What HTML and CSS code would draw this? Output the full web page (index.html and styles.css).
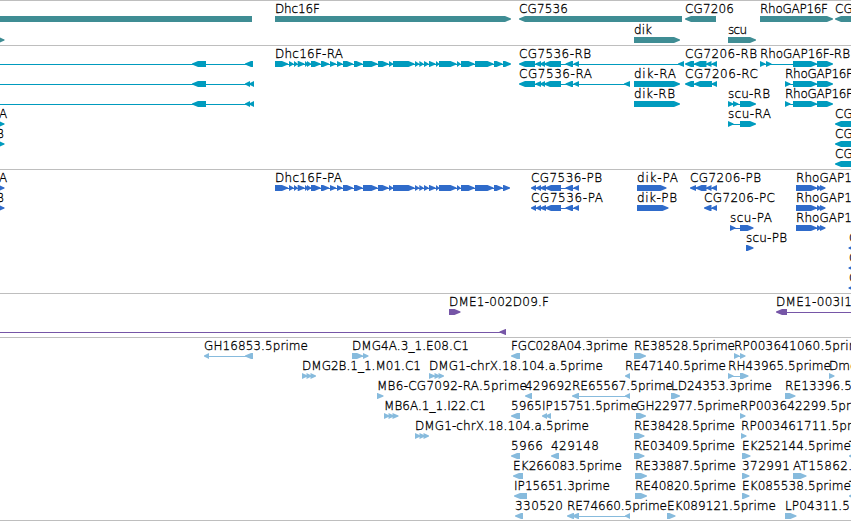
FILE: index.html
```html
<!DOCTYPE html>
<html lang="en">
<head>
    <meta charset="UTF-8">
    <meta name="viewport" content="width=device-width, initial-scale=1.0">
    <title>Genome Browser</title>
    <link rel="stylesheet" href="styles.css">
</head>
<body>
    <div class="browser">
        <svg class="track genes" id="genes"></svg>
        <svg class="track transcripts" id="transcripts"></svg>
        <svg class="track proteins" id="proteins"></svg>
        <svg class="track bacs" id="bacs"></svg>
        <svg class="track ests" id="ests"></svg>
    </div>
    <script src="tracks.js"></script>
</body>
</html>
```
FILE: styles.css
```css
body {
    margin: 0;
    background-color: #fff;
    overflow: hidden;
}
.browser {
    display: flex;
    flex-direction: column;
    width: 851px;
    border-bottom: 1px solid #bebebe;
}
.track {
    display: block;
    box-sizing: border-box;
    width: 100%;
    border-top: 1px solid #bebebe;
    overflow: hidden;
}
.genes {
    height: 45px;
    color: #3f8d94;
}
.transcripts {
    height: 124px;
    color: #009bbe;
}
.proteins {
    height: 124px;
    color: #2f6bca;
}
.bacs {
    height: 44px;
    color: #7656a7;
}
.ests {
    height: 183px;
    color: #87bbdd;
}
.label {
    font-family: "DejaVu Sans", sans-serif;
    font-size: 12px;
    font-weight: 200;
    fill: #000;
    stroke: #000;
    stroke-width: 0.3px;
}
.block {
    fill: currentColor;
}
.intron {
    fill: currentColor;
    shape-rendering: crispEdges;
}
```
FILE: tracks.js
```js
// Feature: [row, strand, label, label start, label end (0 = natural width), blocks]
const dhcBlocks = [
    [275, 288], [289, 293.5], [294, 297.5], [297.7, 304.5], [305, 308], [307, 311],
    [311, 320.5], [321, 329], [330, 336], [337, 342.5], [343, 353], [354, 362.5],
    [363, 377.5], [378, 388.5], [389, 393], [393, 414.5], [415, 419], [419.3, 423.5],
    [424, 428.5], [429, 435.5], [436, 439], [439, 456.5], [457, 460.5], [461, 474.5],
    [475, 493.5], [494, 502.5], [503, 511]
];
const rhoBlocks = [[785, 790.5], [793, 817], [817, 833]];
const rhoProtein = [[796, 817], [817, 821.5], [820, 825.5]];
const cg7536 = [[519, 535], [535.3, 541], [540, 545], [544, 561], [565.5, 573], [573.5, 579]];
const cg7536Protein = [[531, 536], [536, 541], [540, 546], [545, 561], [565.5, 573], [573.5, 579]];

const tracks = {
    genes: {
        pitch: 21,
        features: [
            [0, '-', '', 0, 0, [[-10, 252]]],
            [1, '+', '', 0, 0, [[-10, 4.5]]],
            [0, '+', 'Dhc16F', 275, 320, [[275, 511]]],
            [0, '-', 'CG7536', 519, 568, [[519, 682]]],
            [1, '+', 'dik', 634, 652, [[634, 680]]],
            [0, '-', 'CG7206', 685, 734, [[685, 716]]],
            [1, '+', 'scu', 728, 747, [[728, 756]]],
            [0, '+', 'RhoGAP16F', 760, 828, [[760, 833]]],
            [0, '-', 'CG', 835, 0, [[835, 870]]]
        ]
    },
    transcripts: {
        pitch: 20,
        features: [
            [0, '-', '', 0, 0, [[-20, -10], [192, 206], [245, 253]]],
            [1, '-', '', 0, 0, [[-20, -10], [192, 206], [245, 250], [249, 254]]],
            [2, '-', '', 0, 0, [[-20, -10], [192, 206], [245, 250], [249, 254]]],
            [3, '+', 'A', -1, 0, [[-10, 4.5]]],
            [4, '+', 'B', -4, 0, [[-10, 4.5]]],
            [0, '+', 'Dhc16F-RA', 275, 343, dhcBlocks],
            [0, '-', 'CG7536-RB', 519, 591, [...cg7536, [678, 684]]],
            [1, '-', 'CG7536-RA', 519, 592, [...cg7536, [624, 630]]],
            [1, '+', 'dik-RA', 634, 676, [[634, 680]]],
            [2, '+', 'dik-RB', 634, 675, [[634, 680]]],
            [0, '-', 'CG7206-RB', 685, 757, [[685, 694], [694, 706.5], [706, 711.5], [711.5, 717]]],
            [1, '-', 'CG7206-RC', 685, 758, [[685, 694], [694, 712], [711.5, 717]]],
            [0, '+', 'RhoGAP16F-RB', 760, 850, [[760, 765.5], [766, 771.5], [793, 817], [817, 833]]],
            [1, '+', 'RhoGAP16F', 785, 853, rhoBlocks],
            [2, '+', 'RhoGAP16F', 785, 853, rhoBlocks],
            [2, '+', 'scu-RB', 728, 770, [[728, 733.5], [733, 738.5], [740, 756]]],
            [3, '+', 'scu-RA', 728, 771, [[728, 733.5], [740, 756]]],
            [3, '-', 'CG', 835, 0, [[835, 870]]],
            [4, '-', 'CG', 835, 0, [[835, 870]]],
            [5, '-', 'CG', 835, 0, [[835, 870]]]
        ]
    },
    proteins: {
        pitch: 20,
        features: [
            [0, '+', 'A', -1, 0, [[-10, 4.5]]],
            [1, '+', 'B', -4, 0, [[-10, 4.5]]],
            [0, '+', 'Dhc16F-PA', 275, 342, [...dhcBlocks.slice(0, -1), [503, 510]]],
            [0, '-', 'CG7536-PB', 531, 602, cg7536Protein],
            [1, '-', 'CG7536-PA', 531, 603, cg7536Protein],
            [0, '+', 'dik-PA', 637, 678, [[637, 666.5]]],
            [1, '+', 'dik-PB', 637, 677, [[637, 668.5]]],
            [0, '-', 'CG7206-PB', 690, 761, [[690, 696], [695.5, 706.5], [706, 711.5], [711.5, 717]]],
            [1, '-', 'CG7206-PC', 704, 775, [[704, 711.5], [711.5, 717]]],
            [2, '+', 'scu-PA', 730, 772, [[730, 735.5], [740, 753.5]]],
            [3, '+', 'scu-PB', 746, 787, [[746, 753.5]]],
            [0, '+', 'RhoGAP1', 796, 852, rhoProtein],
            [1, '+', 'RhoGAP1', 796, 852, rhoProtein],
            [2, '+', 'RhoGAP1', 796, 852, rhoProtein],
            [3, '-', 'C', 849, 0, [[848.5, 870]]],
            [4, '-', 'C', 849, 0, [[848.5, 870]]],
            [5, '-', 'C', 849, 0, [[848.5, 870]]]
        ]
    },
    bacs: {
        pitch: 20,
        features: [
            [0, '+', 'DME1-002D09.F', 449, 549, [[449, 460.5]]],
            [1, '-', '', 0, 0, [[-20, -10], [499.5, 506]]],
            [0, '-', 'DME1-003I1', 776, 852, [[776, 787], [870, 880]]]
        ]
    },
    ests: {
        pitch: 20,
        features: [
            [0, '-', 'GH16853.5prime', 204, 308, [[204, 209], [245, 253]]],
            [0, '+', 'DMG4A.3_1.E08.C1', 352, 469, [[352, 363], [363, 368.5]]],
            [0, '-', 'FGC028A04.3prime', 511, 628, [[511, 520]]],
            [0, '+', 'RE38528.5prime', 634, 735, [[634, 646]]],
            [0, '+', 'RP003641060.5prime', 734, 868, [[734, 739.5], [740, 745.5]]],
            [1, '+', 'DMG2B.1_1.M01.C1', 302, 421, [[302, 307.5], [306.5, 311.5], [310.5, 316]]],
            [1, '+', 'DMG1-chrX.18.104.a.5prime', 429, 603, [[429, 435], [434.5, 440], [438.5, 444]]],
            [1, '-', 'RE47140.5prime', 625, 726, [[625, 630]]],
            [1, '+', 'RH43965.5prime', 728, 831, [[728, 733.5], [740, 748.5]]],
            [1, '+', 'Dme', 829, 0, [[829, 834.5]]],
            [2, '+', 'MB6-CG7092-RA.5prime', 377, 527, [[377, 383.5]]],
            [2, '-', '429692', 525, 572, [[525, 532]]],
            [2, '-', 'RE65567.5prime', 572, 673, [[572, 579], [625, 630]]],
            [2, '+', 'LD24353.3prime', 671, 772, [[671, 680]]],
            [2, '+', 'RE13396.5', 785, 852, [[785, 795.5]]],
            [3, '+', 'MB6A.1_1.I22.C1', 384, 486, [[384, 389.5], [388.5, 394], [392.5, 398.5]]],
            [3, '-', '5965', 511, 542, [[511, 520]]],
            [3, '-', 'IP15751.5prime', 542, 638, [[542, 547], [545.5, 551]]],
            [3, '+', 'GH22977.5prime', 636, 740, [[636, 646]]],
            [3, '+', 'RP003642299.5prime', 740, 874, [[740, 745.5]]],
            [4, '+', 'DMG1-chrX.18.104.a.5prime', 415, 589, [[415, 420.5], [419.5, 425], [423.5, 429]]],
            [4, '+', 'RE38428.5prime', 634, 735, [[634, 644.5]]],
            [4, '+', 'RP003461711.5prime', 741, 875, [[741, 746.5]]],
            [5, '-', '5966', 511, 543, [[511, 520]]],
            [5, '-', '429148', 551, 599, [[551, 559]]],
            [5, '+', 'RE03409.5prime', 634, 735, [[634, 644.5]]],
            [5, '+', 'EK252144.5prime', 742, 851, [[742, 750.5]]],
            [5, '-', 'T', 849, 0, [[849, 858]]],
            [6, '-', 'EK266083.5prime', 513, 622, [[513, 523]]],
            [6, '+', 'RE33887.5prime', 635, 736, [[635, 647]]],
            [6, '+', '372991', 742, 790, [[742, 749.5]]],
            [6, '+', 'AT15862.', 793, 852, [[793, 806.5]]],
            [7, '-', 'IP15651.3prime', 514, 610, [[514, 527]]],
            [7, '+', 'RE40820.5prime', 635, 736, [[635, 647]]],
            [7, '+', 'EK085538.5prime', 742, 851, [[742, 749.5]]],
            [7, '-', 'T', 849, 0, [[849, 858]]],
            [8, '-', '330520', 515, 563, [[515, 523]]],
            [8, '-', 'RE74660.5prime', 567, 667, [[567, 574], [572, 579], [625, 630]]],
            [8, '+', 'EK089121.5prime', 667, 776, [[667, 675.5]]],
            [8, '+', 'LP04311.5', 785, 850, [[785, 796.5]]]
        ]
    }
};

// Block with an arrow head on the strand side
function blockPath(start, end, y, strand) {
    const head = Math.min(6, end - start);
    const neck = head * 0.6;
    if (strand === '+') {
        return `M${start} ${y}H${end - head}L${end - head + neck} ${y + 1.4}L${end} ${y + 2.6}V${y + 3.4}` +
            `L${end - head + neck} ${y + 4.6}L${end - head} ${y + 6}H${start}Z`;
    }
    return `M${end} ${y}H${start + head}L${start + head - neck} ${y + 1.4}L${start} ${y + 2.6}V${y + 3.4}` +
        `L${start + head - neck} ${y + 4.6}L${start + head} ${y + 6}H${end}Z`;
}

function drawTrack(id, track) {
    let content = '';
    track.features.forEach(([row, strand, label, x, labelEnd, blocks]) => {
        const top = row * track.pitch;
        const first = blocks[0][0] + 2;
        const last = blocks[blocks.length - 1][1] - 2;
        if (blocks.length > 1) {
            content += `<rect class="intron" x="${first}" y="${top + 18}" width="${last - first}" height="1"/>`;
        }
        blocks.forEach(([start, end]) => {
            content += `<path class="block" d="${blockPath(start, end, top + 15, strand)}"/>`;
        });
        if (label) {
            const fit = labelEnd ? ` textLength="${labelEnd - x}"` : '';
            content += `<text class="label" x="${x}" y="${top + 12}"${fit}>${label}</text>`;
        }
    });
    document.getElementById(id).innerHTML = content;
}

Object.keys(tracks).forEach(id => drawTrack(id, tracks[id]));
```
